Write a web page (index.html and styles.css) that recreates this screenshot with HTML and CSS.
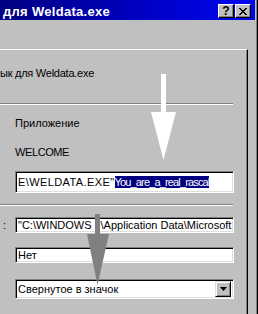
FILE: index.html
```html
<!DOCTYPE html>
<html>
<head>
<meta charset="utf-8">
<link rel="stylesheet" href="styles.css">
</head>
<body>
<div class="window">
  <div class="titlebar">
    <span class="title">для Weldata.exe</span>
    <div class="caption-buttons">
      <div class="cap-btn help">?</div>
      <div class="cap-btn close">
        <svg width="8" height="7" viewBox="0 0 8 7"><path d="M0 0h2v1h1v1h2v-1h1v-1h2v1h-1v1h-1v1h-1v1h1v1h1v1h1v1h-2v-1h-1v-1h-2v1h-1v1h-2v-1h1v-1h1v-1h1v-1h-1v-1h-1v-1h-1z" fill="#000"/></svg>
      </div>
    </div>
  </div>
  <div class="client">
    <div class="tabpage">
      <div class="name-row">ык для Weldata.exe</div>
      <div class="sep"></div>
      <div class="label app">Приложение</div>
      <div class="label welcome">WELCOME</div>
      <div class="field cmd"><span class="path">E\WELDATA.EXE"</span><span class="sel">You_are_a_real_rascal</span></div>
      <div class="sep sep2"></div>
      <div class="row work">
        <span class="colon">:</span>
        <div class="field small">"C:\WINDOWS<span class="gap">\Application Data\Microsoft</span></div>
      </div>
      <div class="field small key">Нет</div>
      <div class="field combo">
        <span>Свернутое в значок</span>
        <div class="drop-btn"><svg width="7" height="4" viewBox="0 0 7 4"><path d="M0 0h7l-3.5 4z" fill="#000"/></svg></div>
      </div>
    </div>
  </div>
  <svg class="arrows" width="258" height="314" viewBox="0 0 258 314">
    <rect x="161" y="74" width="5" height="39" fill="#fff"/>
    <polygon points="151,112 176,112 163.5,160" fill="#fff"/>
    <rect x="95" y="214" width="5" height="21" fill="#808080"/>
    <polygon points="87,234 109,234 97.5,285" fill="#808080"/>
  </svg>
</div>
</body>
</html>
```
FILE: styles.css
```css
html, body {
  margin: 0;
  padding: 0;
}
body {
  width: 258px;
  height: 314px;
  overflow: hidden;
  background: #c0c0c0;
  font-family: "Liberation Sans", Arial, sans-serif;
  font-size: 11px;
  color: #000;
}
.window {
  position: relative;
  width: 258px;
  height: 314px;
  box-sizing: border-box;
  padding-right: 2px;
  border-right: 1px solid #000;
  box-shadow: inset -1px 0 #808080;
  background: #c0c0c0;
  overflow: hidden;
}
.titlebar {
  height: 20px;
  display: flex;
  align-items: center;
  justify-content: space-between;
  background: linear-gradient(to right, #000080 0%, #0000c8 60%, #0008f0 100%);
  padding: 0 4px 0 3px;
}
.title {
  color: #fff;
  font-weight: bold;
  font-size: 13px;
  letter-spacing: 0.3px;
  padding-top: 2px;
}
.caption-buttons {
  display: flex;
  gap: 1px;
  padding-top: 2px;
}
.cap-btn {
  width: 16px;
  height: 14px;
  box-sizing: border-box;
  background: #c0c0c0;
  border-top: 1px solid #fff;
  border-left: 1px solid #fff;
  border-right: 1px solid #000;
  border-bottom: 1px solid #000;
  box-shadow: inset -1px -1px #808080;
  display: flex;
  align-items: center;
  justify-content: center;
}
.help {
  font-weight: bold;
  font-size: 12px;
  line-height: 12px;
}
.client {
  padding-top: 29px;
}
.tabpage {
  width: 248px;
  height: 300px;
  box-sizing: border-box;
  border-top: 1px solid #fff;
  border-right: 1px solid #000;
  box-shadow: inset -1px 0 #808080;
}
.name-row {
  line-height: 13px;
  margin-top: 17px;
  letter-spacing: -0.25px;
}
.sep {
  width: 233px;
  height: 0;
  border-top: 1px solid #808080;
  border-bottom: 1px solid #fff;
  margin-top: 23px;
}
.label {
  line-height: 13px;
  padding-left: 15px;
}
.app {
  margin-top: 12px;
}
.welcome {
  margin-top: 16px;
  letter-spacing: -0.4px;
}
.field {
  margin-left: 15px;
  width: 219px;
  box-sizing: border-box;
  background: #fff;
  border-top: 1px solid #808080;
  border-left: 1px solid #808080;
  border-right: 1px solid #fff;
  border-bottom: 1px solid #fff;
  box-shadow: inset 1px 1px #000, inset -1px -1px #dfdfdf;
  white-space: nowrap;
  overflow: hidden;
  display: flex;
  align-items: center;
  padding-left: 2px;
}
.cmd {
  height: 22px;
  margin-top: 12px;
}
.path {
  letter-spacing: 0.4px;
}
.sel {
  background: #000080;
  color: #fff;
  line-height: 12px;
  letter-spacing: -0.85px;
}
.sep2 {
  margin-top: 11px;
}
.row {
  display: flex;
  align-items: center;
  margin-top: 11px;
}
.colon {
  width: 15px;
  padding-left: 3px;
  box-sizing: border-box;
}
.row .field {
  margin-left: 0;
}
.small {
  height: 16px;
}
.gap {
  margin-left: 9px;
}
.key {
  margin-top: 14px;
}
.combo {
  height: 20px;
  margin-top: 16px;
  justify-content: space-between;
  padding-right: 2px;
}
.drop-btn {
  width: 16px;
  height: 16px;
  box-sizing: border-box;
  background: #c0c0c0;
  border-top: 1px solid #dfdfdf;
  border-left: 1px solid #dfdfdf;
  border-right: 1px solid #000;
  border-bottom: 1px solid #000;
  box-shadow: inset 1px 1px #fff, inset -1px -1px #808080;
  display: flex;
  align-items: center;
  justify-content: center;
}
.arrows {
  position: absolute;
  left: 0;
  top: 0;
  pointer-events: none;
}
```
